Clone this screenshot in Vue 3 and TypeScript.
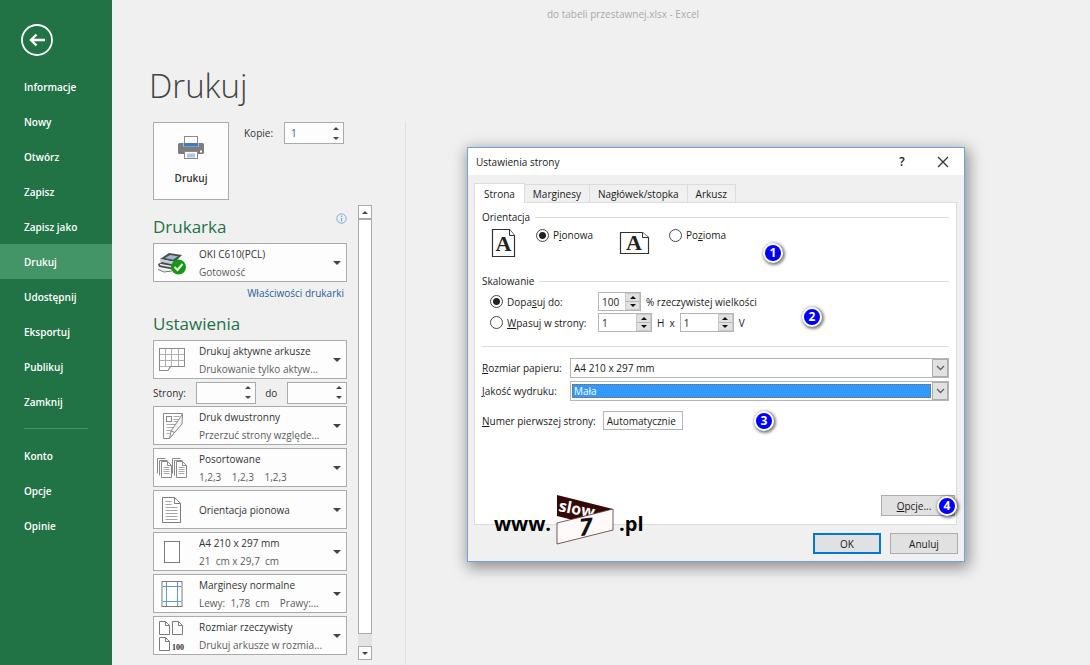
<script setup lang="ts">
import { ref } from 'vue'

const mainNav: string[] = ['Informacje', 'Nowy', 'Otwórz', 'Zapisz', 'Zapisz jako', 'Drukuj', 'Udostępnij', 'Eksportuj', 'Publikuj', 'Zamknij']
const footNav: string[] = ['Konto', 'Opcje', 'Opinie']
const activeNav = ref('Drukuj')

interface Option { icon: string; title: string; sub?: string }
const firstOption: Option = { icon: 'sheet', title: 'Drukuj aktywne arkusze', sub: 'Drukowanie tylko aktyw...' }
const options: Option[] = [
  { icon: 'duplex', title: 'Druk dwustronny', sub: 'Przerzuć strony względe...' },
  { icon: 'collate', title: 'Posortowane', sub: '1,2,3    1,2,3    1,2,3' },
  { icon: 'portrait', title: 'Orientacja pionowa' },
  { icon: 'paper', title: 'A4 210 x 297 mm', sub: '21  cm x 29,7  cm' },
  { icon: 'margins', title: 'Marginesy normalne', sub: 'Lewy:  1,78  cm    Prawy:...' },
  { icon: 'scale', title: 'Rozmiar rzeczywisty', sub: 'Drukuj arkusze w rozmia...' },
]
const allOptions: Option[] = [firstOption, ...options]

const tabs: string[] = ['Strona', 'Marginesy', 'Nagłówek/stopka', 'Arkusz']
const activeTab = ref('Strona')

const copies = ref('1')
const pageFrom = ref('')
const pageTo = ref('')
const orientation = ref('portrait')
const scaling = ref('percent')
const percent = ref('100')
const wide = ref('1')
const tall = ref('1')
const paper = ref('A4 210 x 297 mm')
const quality = ref('Mała')
const firstPage = ref('Automatycznie')
</script>

<template>
  <div class="app">
    <aside class="side">
      <button class="back" aria-label="Wstecz">
        <svg width="34" height="34" viewBox="0 0 34 34" fill="none" stroke="#fff">
          <circle cx="17" cy="17" r="15" stroke-width="1.8" />
          <path d="M25 17H11M16.500 11.500L11 17l5.500 5.500" stroke-width="2.400" />
        </svg>
      </button>
      <nav>
        <button v-for="n in mainNav" :key="n" class="nav" :class="{ on: n === activeNav }" @click="activeNav = n">{{ n }}</button>
        <hr class="nav-line" />
        <button v-for="n in footNav" :key="n" class="nav">{{ n }}</button>
      </nav>
    </aside>

    <main class="main">
      <header class="caption">do tabeli przestawnej.xlsx - Excel</header>
      <h1>Drukuj</h1>
      <div class="content">
        <section class="print">
          <div class="top-row">
            <button class="print-btn">
              <svg width="28" height="25" viewBox="0 0 28 25">
                <path d="M1 9.500q0-1.500 1.500-1.500H6v3.500h16V8h3.500q1.500 0 1.500 1.500v8q0 1.500-1.500 1.500H2.500Q1 19 1 17.500z" fill="#7d7d7d" />
                <rect x="7.500" y="1.500" width="13" height="9" fill="#fff" stroke="#8a8a8a" />
                <rect x="6.500" y="8" width="15" height="3.500" fill="#3e7dbd" />
                <rect x="7.500" y="16.500" width="13" height="7" fill="#fff" stroke="#8a8a8a" />
                <rect x="10" y="18.500" width="8" height="4" fill="#a9c8ea" />
                <rect x="23" y="15.500" width="2" height="2" fill="#fff" />
              </svg>
              <span>Drukuj</span>
            </button>
            <label for="copies" class="copies-label">Kopie:</label>
            <span class="spin">
              <input id="copies" v-model="copies" class="blue" />
              <span class="steps">
                <button aria-label="Więcej"><i class="up"></i></button>
                <button aria-label="Mniej"><i class="down"></i></button>
              </span>
            </span>
          </div>

          <div class="scroll-area">
            <div class="settings">
              <div class="heading">
                <h2>Drukarka</h2>
                <button class="info" aria-label="Informacje o drukarce">
                  <svg width="11" height="11" viewBox="0 0 11 11" fill="none" stroke="#7fa9dc">
                    <circle cx="5.500" cy="5.500" r="4.700" />
                    <path d="M5.500 5v3.400M5.500 2.600v1.300" stroke-width="1.200" />
                  </svg>
                </button>
              </div>
              <button class="option" aria-haspopup="listbox">
                <span class="icon">
                  <svg width="30" height="26" viewBox="0 0 30 26">
                    <path d="M3 9L12 3l13 2-7 7z" fill="#4a4f55" />
                    <path d="M8 8l5-3 8 1.200-5 3.600z" fill="#9db9cc" />
                    <path d="M3 9l15 3v4L3 12z" fill="#c9cdd1" />
                    <path d="M1 14l4-2 13 3v5L2 17z" fill="#4b4f53" />
                    <path d="M3 14.500l13 2.500M1 18.500l13 3" stroke="#e7e9ea" stroke-width="1.400" />
                    <path d="M1 19.500l6 2.500 8-1" fill="none" stroke="#777" />
                    <circle cx="21.500" cy="17" r="7.500" fill="#129a12" />
                    <path d="M17.500 17l3 3 5-6" fill="none" stroke="#fff" stroke-width="2" />
                  </svg>
                </span>
                <span class="texts"><span class="t">OKI C610(PCL)</span><span class="s">Gotowość</span></span>
                <i class="down"></i>
              </button>
              <a class="props" href="#">Właściwości drukarki</a>
              <h2 class="second">Ustawienia</h2>

              <div class="list">
                <template v-for="o in allOptions" :key="o.icon">
                  <button class="option" aria-haspopup="listbox">
                    <span class="icon">
                      <svg v-if="o.icon === 'sheet'" width="28" height="26" viewBox="0 0 28 26" fill="none" stroke="#8a8a8a">
                        <path d="M1.500 1.500h25v18H12.500l-2.500 4H1.500z" fill="#fff" />
                        <path d="M1.500 19.500h11M7.500 1.500v18M13.500 1.500v18M20.500 1.500v18M1.500 7.500h25M1.500 13.500h25" stroke="#b0b0b0" />
                        <path d="M1.500 1.500h25v18H12.500l-2.500 4H1.500z" />
                      </svg>
                      <svg v-else-if="o.icon === 'duplex'" width="28" height="28" viewBox="0 0 28 28" fill="none" stroke="#8a8a8a">
                        <path d="M5.500 1.500h19l-2 11-11 14h-6z" fill="#fff" />
                        <rect x="8.500" y="4.500" width="5" height="5" />
                        <path d="M15.500 4.500h6M15.500 7.500h6M15.500 9.500h5M8.500 12.500h11M8.500 15.500h8M8.500 18.500h5M8.500 21.500h3" stroke="#aaa" />
                        <path d="M24.500 2L13 19l-1.500 7.500L24 12z" fill="#f3f3f3" />
                        <path d="M13 19l4 1.500" />
                      </svg>
                      <svg v-else-if="o.icon === 'collate'" width="32" height="24" viewBox="0 0 32 24" fill="#fff" stroke="#8a8a8a">
                        <g v-for="x in [0, 15]" :key="x" :transform="`translate(${x} 0)`">
                          <path d="M1.500 17.500v-15h8M3.500 19.500v-15h8" fill="none" />
                          <path d="M5.500 5.500h6l4 4v12h-10z" />
                          <path d="M11.500 5.500v4h4" fill="none" />
                          <path d="M7.500 11.500h6M7.500 13.500h6M7.500 15.500h6M7.500 17.500h6" stroke="#aaa" />
                        </g>
                      </svg>
                      <svg v-else-if="o.icon === 'portrait'" width="22" height="28" viewBox="0 0 22 28" fill="none" stroke="#7c7c7c">
                        <path d="M1.500 1.500h12l6 6v19h-18z" fill="#fff" />
                        <path d="M13.500 1.500v6h6" />
                        <path d="M4.500 5.500h6M4.500 8.500h6M4.500 11.500h12M4.500 14.500h12M4.500 17.500h12M4.500 20.500h12M4.500 23.500h12" stroke="#a5a5a5" />
                      </svg>
                      <svg v-else-if="o.icon === 'paper'" width="18" height="24" viewBox="0 0 18 24" fill="#fff" stroke="#7c7c7c">
                        <rect x="1.500" y="1.500" width="15" height="21" />
                      </svg>
                      <svg v-else-if="o.icon === 'margins'" width="22" height="28" viewBox="0 0 22 28" fill="none" stroke="#7c7c7c">
                        <rect x="1" y="1.500" width="20" height="25" fill="#fff" />
                        <path d="M5.500 2v24M16.500 2v24M1.500 6.500h19M1.500 21.500h19" stroke="#5b9bd5" />
                      </svg>
                      <svg v-else width="28" height="32" viewBox="0 0 28 32" fill="#fff" stroke="#7c7c7c">
                        <path d="M1.500 1.500h6l4 4v9h-10z" /><path d="M7.500 1.500v4h4" fill="none" />
                        <path d="M14.500 1.500h6l4 4v9h-10z" /><path d="M20.500 1.500v4h4" fill="none" />
                        <path d="M1.500 17.500h6l4 4v9h-10z" /><path d="M7.500 17.500v4h4" fill="none" />
                        <text x="14" y="30" class="hundred">100</text>
                      </svg>
                    </span>
                    <span class="texts"><span class="t">{{ o.title }}</span><span v-if="o.sub" class="s">{{ o.sub }}</span></span>
                    <i class="down"></i>
                  </button>
                  <div v-if="o.icon === 'sheet'" class="pages">
                    <label for="from">Strony:</label>
                    <span class="spin">
                      <input id="from" v-model="pageFrom" />
                      <span class="steps">
                        <button aria-label="Więcej"><i class="up"></i></button>
                        <button aria-label="Mniej"><i class="down"></i></button>
                      </span>
                    </span>
                    <label for="to" class="to">do</label>
                    <span class="spin">
                      <input id="to" v-model="pageTo" />
                      <span class="steps">
                        <button aria-label="Więcej"><i class="up"></i></button>
                        <button aria-label="Mniej"><i class="down"></i></button>
                      </span>
                    </span>
                  </div>
                </template>
              </div>
            </div>
            <div class="bar">
              <button aria-label="W górę"><i class="up"></i></button>
              <div class="thumb"></div>
              <button aria-label="W dół"><i class="down"></i></button>
            </div>
          </div>
        </section>

        <section class="preview">
          <div class="dialog" role="dialog" aria-labelledby="dlg-title">
            <div class="dlg-head">
              <span id="dlg-title">Ustawienia strony</span>
              <button class="help" aria-label="Pomoc">?</button>
              <button class="close" aria-label="Zamknij okno">
                <svg width="12" height="12" viewBox="0 0 12 12" stroke="#333" stroke-width="1.300"><path d="M1 1l10 10M11 1L1 11" /></svg>
              </button>
            </div>
            <div class="tabs" role="tablist">
              <button v-for="t in tabs" :key="t" role="tab" class="tab" :class="{ on: t === activeTab }" :aria-selected="t === activeTab" @click="activeTab = t">{{ t }}</button>
            </div>
            <div class="panel">
              <div class="legend"><span>Orientacja</span></div>
              <div class="orient">
                <svg width="26" height="30" viewBox="0 0 26 30" fill="#fff" stroke="#333">
                  <path d="M1.500 1.500h17l5 6v21h-22z" stroke-width="1.200" /><path d="M18.500 1.500v6h5" />
                  <text x="12.500" y="23" class="glyph">A</text>
                </svg>
                <label class="radio"><input v-model="orientation" type="radio" name="orientation" value="portrait" /><span>P<u>i</u>onowa</span></label>
                <svg class="land" width="31" height="24" viewBox="0 0 31 24" fill="#fff" stroke="#333">
                  <path d="M1.500 1.500h22l6 5v16h-28z" stroke-width="1.200" /><path d="M23.500 1.500v5h6" />
                  <text x="15" y="19" class="glyph">A</text>
                </svg>
                <label class="radio"><input v-model="orientation" type="radio" name="orientation" value="landscape" /><span>Po<u>z</u>ioma</span></label>
              </div>

              <div class="legend"><span>Skalowanie</span></div>
              <div class="scale">
                <label class="radio"><input v-model="scaling" type="radio" name="scaling" value="percent" /><span>Dopa<u>s</u>uj do:</span></label>
                <div class="fields">
                  <span class="num short"><input v-model="percent" aria-label="Procent" /><span class="steps"><button aria-label="Więcej"><i class="up"></i></button><button aria-label="Mniej"><i class="down"></i></button></span></span>
                  <span>% rzeczywistej wielkości</span>
                </div>
                <label class="radio"><input v-model="scaling" type="radio" name="scaling" value="fit" /><span><u>W</u>pasuj w strony:</span></label>
                <div class="fields">
                  <span class="num"><input v-model="wide" aria-label="Strony w poziomie" /><span class="steps"><button aria-label="Więcej"><i class="up"></i></button><button aria-label="Mniej"><i class="down"></i></button></span></span>
                  <span>H&nbsp; x</span>
                  <span class="num"><input v-model="tall" aria-label="Strony w pionie" /><span class="steps"><button aria-label="Więcej"><i class="up"></i></button><button aria-label="Mniej"><i class="down"></i></button></span></span>
                  <span>V</span>
                </div>
              </div>
              <hr class="rule" />

              <div class="form">
                <label for="paper"><u>R</u>ozmiar papieru:</label>
                <div class="select">
                  <select id="paper" v-model="paper"><option>A4 210 x 297 mm</option></select>
                  <span class="chev"><svg width="9" height="6" viewBox="0 0 9 6" fill="none" stroke="#666" stroke-width="1.400"><path d="M1 1l3.500 3.500L8 1" /></svg></span>
                </div>
                <label for="quality"><u>J</u>akość wydruku:</label>
                <div class="select focus">
                  <select id="quality" v-model="quality"><option>Mała</option></select>
                  <span class="chev"><svg width="9" height="6" viewBox="0 0 9 6" fill="none" stroke="#666" stroke-width="1.400"><path d="M1 1l3.500 3.500L8 1" /></svg></span>
                </div>
              </div>
              <div class="first">
                <label for="first"><u>N</u>umer pierwszej strony:</label>
                <input id="first" v-model="firstPage" />
              </div>
              <div class="more"><button class="btn"><span><u>O</u>pcje...</span></button></div>

              <span class="badge b1">1</span>
              <span class="badge b2">2</span>
              <span class="badge b3">3</span>
              <span class="badge b4">4</span>
              <div class="brand">
                <span>www.</span>
                <svg width="58" height="52" viewBox="0 0 58 52">
                  <path d="M1 1L57 15 17 26 1 22z" fill="#350808" />
                  <text x="2" y="17" transform="rotate(11 2 17)" class="slow">slow</text>
                  <path d="M1 29L57 15v21L1 50z" fill="#fffafa" stroke="#5b3030" stroke-width=".8" />
                  <text x="24" y="42" transform="rotate(-6 24 42)" class="seven">7</text>
                </svg>
                <span>.pl</span>
              </div>
            </div>
            <div class="actions">
              <button class="btn ok">OK</button>
              <button class="btn">Anuluj</button>
            </div>
          </div>
        </section>
      </div>
    </main>
  </div>
</template>

<style>
body { background: #f0f0f0; }
</style>

<style scoped>
* { box-sizing: border-box; }
.app {
  display: flex;
  min-height: 100vh;
  background: #f0f0f0;
  color: #333;
  font: 500 10px/18px "Open Sans", "Noto Sans", sans-serif;
}
button, input, select { font: inherit; color: inherit; margin: 0; padding: 0; border: 0; background: none; }
input { min-width: 0; outline: 0; }
i { display: block; width: 0; height: 0; border: 3px solid transparent; flex: none; }
i.up { border-top: 0; border-bottom: 3px solid #444; }
i.down { border-bottom: 0; border-top: 3px solid #444; }
.option > i.down { border-width: 4px 4px 0; }

.side { flex: 0 0 112px; background: #217346; color: #fff; padding-top: 23px; }
.back { display: block; margin: 0 0 12px 20px; height: 34px; }
.back svg { display: block; }
.nav { display: block; width: 100%; height: 35px; padding-left: 24px; text-align: left; font-weight: 600; }
.nav.on { background: #439467; }
.nav-line { height: 1px; border: 0; background: #439467; margin: 9px 24px 9px; }

.main { flex: 1; min-width: 0; display: flex; flex-direction: column; }
.caption { padding: 5px 0 5px 44px; text-align: center; color: #aaa; }
h1 { margin: 36px 0 14px 37px; font-size: 33px; line-height: 44px; font-weight: 300; color: #444; }
.content { flex: 1; display: flex; padding-left: 41px; }
.print { flex: 0 0 252px; }
.top-row { display: flex; align-items: flex-start; margin-bottom: 5px; }
.print-btn {
  width: 76px; height: 78px; background: #fdfdfd; border: 1px solid #ababab;
  display: flex; flex-direction: column; align-items: center; justify-content: center; gap: 9px; font-weight: 600;
}
.copies-label { margin: 2px 11px 0 15px; }
.spin { display: flex; width: 60px; height: 22px; border: 1px solid #ababab; background: #fdfdfd; }
.spin input { flex: 1; padding-left: 6px; }
.spin .blue { color: #3b5c8a; }
.steps { display: flex; flex-direction: column; justify-content: space-around; }
.spin .steps { width: 10px; }
.steps button { display: flex; align-items: center; justify-content: center; flex: 1; }
.spin .steps button { justify-content: flex-start; }

.scroll-area { display: flex; gap: 11px; }
.settings { width: 194px; padding-bottom: 5px; }
h2 { margin: 0; font-size: 17px; line-height: 28px; font-weight: 400; color: #217346; }
.heading { display: flex; justify-content: space-between; align-items: flex-start; padding-top: 8px; margin-bottom: 2px; }
.info { height: 11px; }
.info svg { display: block; }
.option {
  width: 100%; height: 39px; display: flex; align-items: center; text-align: left;
  background: #fdfdfd; border: 1px solid #ababab; padding-right: 5px;
}
.icon { width: 36px; display: flex; justify-content: center; flex: none; }
.texts { flex: 1; display: flex; flex-direction: column; padding-left: 9px; white-space: pre; overflow: hidden; }
.s { color: #5c5c5c; }
.props { display: block; text-align: right; color: #2a5d9c; text-decoration: none; padding: 2px 3px 0 0; }
.second { margin: 8px 0 2px; }
.list { display: flex; flex-direction: column; gap: 3px; }
.pages { display: flex; align-items: center; height: 21px; justify-content: space-between; }
.bar { width: 14px; display: flex; flex-direction: column; background: #e3e3e3; }
.bar button { height: 14px; background: #fdfdfd; border: 1px solid #ababab; display: flex; align-items: center; justify-content: center; }
.thumb { flex: 1; margin-bottom: 12px; background: #fff; border: 1px solid #ababab; }
.hundred { font: bold 8px "Liberation Serif", serif; fill: #333; stroke: none; }

.preview { flex: 1; min-width: 0; border-left: 1px solid #e1e1e1; padding: 25px 125px 0 61px; }
.dialog {
  background: #f0f0f0; border: 1px solid #6fa3dc; box-shadow: 2px 4px 14px 2px rgba(0, 0, 0, .4);
  color: #1a1a1a; line-height: 14px;
}
.dlg-head { height: 27px; background: #fff; display: flex; align-items: center; padding: 0 15px 0 8px; }
.dlg-head > span { flex: 1; }
.help { font-size: 12px; font-weight: 600; width: 20px; margin-right: 25px; }
.close svg { display: block; }
.tabs { display: flex; align-items: flex-end; height: 27px; padding: 0 6px; }
.tab { height: 18px; padding: 0 8px; border: 1px solid #dcdcdc; border-bottom: 0; border-left-width: 0; }
.tab.on { height: 20px; padding: 0 9px; background: #fff; border-left-width: 1px; margin-bottom: -1px; position: relative; z-index: 1; }
.panel { position: relative; margin: 0 7px 0 6px; background: #fff; border: 1px solid #dcdcdc; padding: 7px 7px 8px; }
.legend { display: flex; align-items: center; gap: 5px; }
.legend::after { content: ""; flex: 1; height: 1px; background: #dcdcdc; }
.orient { display: flex; align-items: flex-start; padding: 4px 0 15px 9px; height: 50px; }
.orient svg { flex: none; }
.land { margin: 3px 0 0 26px; }
.orient .radio { margin-left: 19px; }
.glyph { font: bold 22px "Liberation Serif", serif; text-anchor: middle; fill: #222; stroke: none; }
.radio { display: flex; align-items: center; gap: 4px; white-space: nowrap; }
.radio input {
  appearance: none; width: 13px; height: 13px; border: 1px solid #444; border-radius: 50%; background: #fff; flex: none;
}
.radio input:checked { background: radial-gradient(circle, #222 0 3px, #fff 4px); }
.scale { display: grid; grid-template-columns: 108px 1fr; row-gap: 2px; padding: 4px 0 14px 8px; }
.fields { display: flex; align-items: center; gap: 5px; white-space: nowrap; }
.num { display: flex; width: 54px; height: 19px; border: 1px solid #b5b5b5; background: #fff; }
.num.short { width: 43px; }
.num input { flex: 1; width: 0; padding-left: 3px; }
.num .steps { width: 15px; background: #e1e1e1; border: 1px solid #c8c8c8; }
.num .steps button + button { border-top: 1px solid #b5b5b5; }
.num i.up { border-bottom-color: #111; }
.num i.down { border-top-color: #111; }
.rule { margin: 0; height: 1px; border: 0; background: #dcdcdc; }
.form { display: grid; grid-template-columns: 88px 1fr; align-items: center; row-gap: 3px; padding: 11px 0 10px; }
.select { display: flex; height: 20px; border: 1px solid #b5b5b5; background: #fff; min-width: 0; }
.select select { flex: 1; min-width: 0; appearance: none; padding-left: 3px; outline: 0; border-radius: 0; }
.focus select { background: #3399ff; color: #fff; margin: 2px 1px; padding-left: 1px; border: 1px dotted #8a6a3a; line-height: 12px; }
.chev { width: 16px; background: #e1e1e1; border: 1px solid #adadad; display: flex; align-items: center; justify-content: center; pointer-events: none; }
.first { display: flex; align-items: center; gap: 7px; }
.first input { width: 80px; height: 19px; border: 1px solid #b5b5b5; padding-left: 3px; }
.more { display: flex; justify-content: flex-end; padding-top: 65px; margin-right: -6px; }
.btn { width: 68px; height: 21px; background: #e1e1e1; border: 1px solid #adadad; }
.more .btn { width: 74px; text-align: center; padding-right: 8px; }
.ok { border: 2px solid #0078d7; }
.actions { display: flex; justify-content: flex-end; gap: 9px; padding: 8px 6px 7px; }

.badge {
  position: absolute; width: 20px; height: 20px; border-radius: 50%; border: 2px solid #fff; background: #00f;
  color: #fff; font-size: 12px; line-height: 16px; font-weight: 700; text-align: center;
  box-shadow: 1px 1px 3px 1px rgba(0, 0, 0, .5);
}
.b1 { left: 288px; top: 40px; }
.b2 { left: 327px; top: 104px; }
.b3 { left: 279px; top: 208px; }
.b4 { right: -1px; bottom: 8px; }
.brand {
  position: absolute; left: 19px; bottom: -22px; display: flex; align-items: center; gap: 5px;
  font-size: 20px; line-height: 28px; font-weight: 700; color: #000;
}
.brand span { padding-top: 7px; }
.slow { font: bold 16px "Open Sans", sans-serif; fill: #fff; }
.seven { font: italic bold 24px "Open Sans", sans-serif; fill: #111; }
</style>
